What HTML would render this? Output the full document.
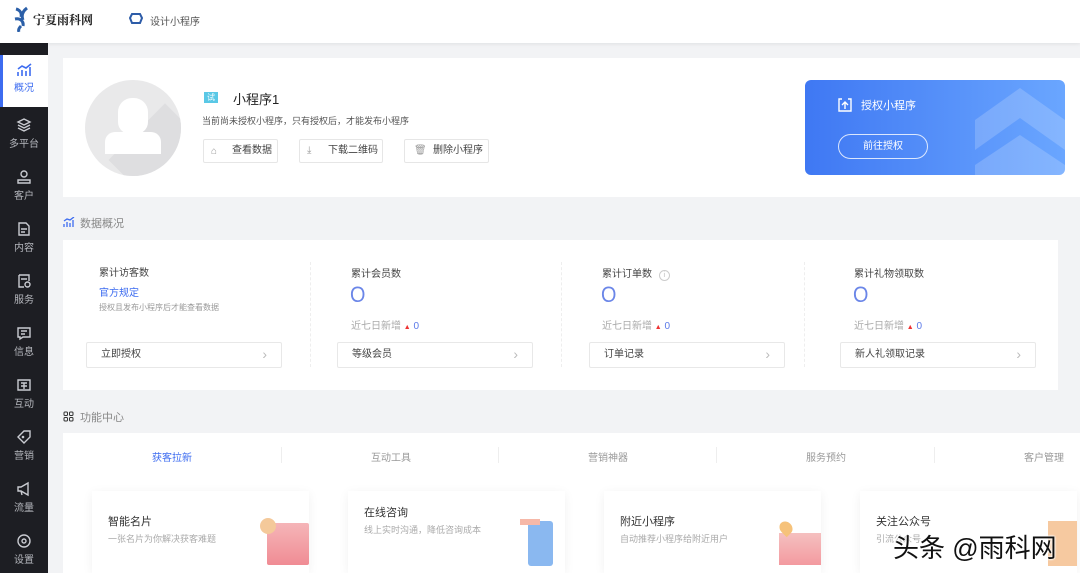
<!DOCTYPE html>
<html><head><meta charset="utf-8"><style>
*{margin:0;padding:0;box-sizing:border-box}
body{width:1080px;height:573px;overflow:hidden;background:#f2f3f5;font-family:"Liberation Sans","Noto Sans CJK SC",sans-serif;position:relative;color:#333}
.abs{position:absolute}
.hdr{left:0;top:0;width:1080px;height:43px;background:#fff;box-shadow:0 1px 4px rgba(0,0,0,.08);z-index:2}
.side{left:0;top:43px;width:48px;height:530px;background:#1d1e23}
.si{position:absolute;left:0;width:48px;text-align:center;color:#b4b6bc;font-size:10px}
.si svg{display:block;margin:0 auto 2px}
.card{background:#fff}
.btn{position:absolute;height:24px;border:1px solid #e6e6e6;border-radius:2px;font-size:10px;color:#444;line-height:22px;padding-left:28px;background:#fff}
.lab{font-size:10px;color:#444}
.zero{font-size:22px;color:#6b86e8;font-weight:300;margin-top:2px;line-height:26px;transform:scaleX(.9);transform-origin:left}
.sub{font-size:10px;color:#aaa}
.lb{position:absolute;width:196px;height:26px;border:1px solid #e8e8e8;border-radius:2px;font-size:10px;line-height:24px;padding-left:14px;color:#444}
.lb:after{content:"›";position:absolute;right:14px;color:#bbb;font-size:14px;top:-1px}
.fc{position:absolute;top:491px;width:217px;height:82px;background:#fff;box-shadow:0 2px 10px rgba(0,0,0,.06)}
.fc b{font-weight:normal;font-size:11px;color:#333;position:absolute;left:16px;top:22px}
.fc i{font-style:normal;font-size:9px;color:#aaa;position:absolute;left:16px;top:41px;width:130px;line-height:15px}
.tab{position:absolute;top:449px;font-size:10px;color:#999}
</style></head><body>
<div class="abs hdr">
 <svg class="abs" style="left:12px;top:6px" width="22" height="26" viewBox="0 0 22 26"><path d="M4 3c4 1 6 4 5 8M15 2c-4 3-6 7-4 12M3 13c5-1 9 2 8 7M9 20c-2 2-3 4-2 6" stroke="#2b5fa8" stroke-width="3" fill="none"/></svg>
 <div class="abs" style="left:33px;top:11px;font-family:'Noto Serif CJK SC',serif;font-size:12px;font-weight:bold;color:#222">宁夏雨科网</div>
 <svg class="abs" style="left:129px;top:12px" width="14" height="13" viewBox="0 0 14 13"><path d="M3 2h8l2 4-2 5H3L1 6z" fill="none" stroke="#2d5ca8" stroke-width="2"/></svg>
 <div class="abs" style="left:150px;top:13px;font-size:10px;color:#555">设计小程序</div>
</div>
<div class="abs side">
 <div class="abs" style="left:0;top:12px;width:48px;height:52px;background:#fff;border-left:3px solid #3d6cf0"></div>
 <div class="si" style="top:20px;color:#3d6cf0"><svg width="16" height="14" viewBox="0 0 16 14"><path d="M2 13V9M6 13V7M10 13V8M14 13V4M2 6l4-3 4 2 5-4" stroke="#3d6cf0" stroke-width="1.6" fill="none"/></svg>概况</div>
 <div class="si" style="top:74px"><svg width="16" height="16" viewBox="0 0 16 16"><path d="M8 2l6 3-6 3-6-3zM2 8l6 3 6-3M2 11l6 3 6-3" stroke="#c9cbd1" stroke-width="1.4" fill="none"/></svg>多平台</div>
 <div class="si" style="top:126px"><svg width="16" height="16" viewBox="0 0 16 16"><circle cx="8" cy="5" r="3" stroke="#c9cbd1" stroke-width="1.4" fill="none"/><path d="M2 14v-3h12v3z" stroke="#c9cbd1" stroke-width="1.4" fill="none"/></svg>客户</div>
 <div class="si" style="top:178px"><svg width="16" height="16" viewBox="0 0 16 16"><path d="M3 2h7l3 3v9H3z M5 8h6M5 11h4" stroke="#c9cbd1" stroke-width="1.4" fill="none"/></svg>内容</div>
 <div class="si" style="top:230px"><svg width="16" height="16" viewBox="0 0 16 16"><path d="M3 2h10v6M3 2v12h5M5 6h6" stroke="#c9cbd1" stroke-width="1.4" fill="none"/><circle cx="11.5" cy="11.5" r="2.5" stroke="#c9cbd1" stroke-width="1.4" fill="none"/></svg>服务</div>
 <div class="si" style="top:282px"><svg width="16" height="16" viewBox="0 0 16 16"><path d="M2 3h12v9H7l-3 2v-2H2z M5 6h6M5 9h4" stroke="#c9cbd1" stroke-width="1.4" fill="none"/></svg>信息</div>
 <div class="si" style="top:334px"><svg width="16" height="16" viewBox="0 0 16 16"><path d="M2 3h12v10H2z M5 6h6M8 6v6M5 9h6" stroke="#c9cbd1" stroke-width="1.4" fill="none"/></svg>互动</div>
 <div class="si" style="top:386px"><svg width="16" height="16" viewBox="0 0 16 16"><path d="M2 8l6-6h6v6l-6 6z" stroke="#c9cbd1" stroke-width="1.4" fill="none"/><circle cx="7" cy="8" r="1.3" fill="#c9cbd1"/></svg>营销</div>
 <div class="si" style="top:438px"><svg width="16" height="16" viewBox="0 0 16 16"><path d="M2 6h3l7-4v12l-7-4H2z M5 10l1 4" stroke="#c9cbd1" stroke-width="1.4" fill="none"/></svg>流量</div>
 <div class="si" style="top:490px"><svg width="16" height="16" viewBox="0 0 16 16"><circle cx="8" cy="8" r="6" stroke="#c9cbd1" stroke-width="1.4" fill="none"/><circle cx="8" cy="8" r="2" stroke="#c9cbd1" stroke-width="1.4" fill="none"/></svg>设置</div>
</div>

<div class="abs card" style="left:63px;top:58px;width:1017px;height:139px"></div>
<div class="abs" style="left:85px;top:80px;width:96px;height:96px;border-radius:50%;background:#e9e9ea;overflow:hidden">
 <div class="abs" style="left:40px;top:40px;width:80px;height:80px;background:#dedee0;transform:rotate(45deg)"></div>
 <div class="abs" style="left:33px;top:18px;width:30px;height:36px;border-radius:14px 14px 12px 12px;background:#fff"></div>
 <div class="abs" style="left:20px;top:52px;width:56px;height:22px;border-radius:10px 10px 0 0;background:#fff"></div>
</div>
<div class="abs" style="left:204px;top:92px;width:14px;height:11px;background:#5ac8e6;color:#fff;font-size:8px;text-align:center;line-height:11px">试</div>
<div class="abs" style="left:233px;top:89px;font-size:13px;color:#222">小程序1</div>
<div class="abs" style="left:202px;top:114px;font-size:9px;color:#555">当前尚未授权小程序，只有授权后，才能发布小程序</div>
<div class="btn" style="left:203px;top:139px;width:75px">查看数据</div>
<div class="btn" style="left:299px;top:139px;width:84px">下载二维码</div>
<div class="btn" style="left:404px;top:139px;width:85px">删除小程序</div>
<div class="abs" style="left:211px;top:146px;font-size:10px;color:#999">⌂</div>
<div class="abs" style="left:307px;top:145px;font-size:10px;color:#999">⤓</div>
<div class="abs" style="left:414px;top:145px;font-size:10px;color:#999">🗑</div>

<div class="abs" style="left:805px;top:80px;width:260px;height:95px;border-radius:6px;background:linear-gradient(90deg,#3f78f3,#6aa6ff);overflow:hidden">
 <svg class="abs" style="left:160px;top:0" width="100" height="95" viewBox="0 0 100 95"><path d="M10 40L55 8l45 32v30L55 38 10 70z" fill="rgba(255,255,255,.18)"/><path d="M10 85L55 55l45 30v20H10z" fill="rgba(255,255,255,.18)"/></svg>
 <svg class="abs" style="left:33px;top:18px" width="14" height="14" viewBox="0 0 14 14"><path d="M4 1H1v12h12V1h-3M7 11V4M4 7l3-3 3 3" stroke="#fff" stroke-width="1.4" fill="none"/></svg>
 <div class="abs" style="left:56px;top:17px;font-size:11px;color:#fff">授权小程序</div>
 <div class="abs" style="left:33px;top:54px;width:90px;height:25px;border:1px solid rgba(255,255,255,.8);border-radius:13px;color:#fff;font-size:10px;text-align:center;line-height:23px">前往授权</div>
</div>

<svg class="abs" style="left:63px;top:217px" width="12" height="11" viewBox="0 0 12 11"><path d="M1 10V7M4 10V5M7 10V6M10 10V3M1 4l3-2 3 1 4-3" stroke="#3d6cf0" stroke-width="1.3" fill="none"/></svg>
<div class="abs" style="left:80px;top:215px;font-size:11px;color:#888">数据概况</div>
<div class="abs card" style="left:63px;top:240px;width:995px;height:150px"></div>
<div class="abs" style="left:310px;top:262px;height:105px;border-left:1px dashed #eee"></div>
<div class="abs" style="left:561px;top:262px;height:105px;border-left:1px dashed #eee"></div>
<div class="abs" style="left:804px;top:262px;height:105px;border-left:1px dashed #eee"></div>

<div class="abs lab" style="left:99px;top:264px">累计访客数</div>
<div class="abs" style="left:99px;top:284px;font-size:10px;color:#3d6cf0">官方规定</div>
<div class="abs" style="left:99px;top:302px;font-size:8px;color:#999">授权且发布小程序后才能查看数据</div>
<div class="lb" style="left:86px;top:342px">立即授权</div>

<div class="abs lab" style="left:351px;top:265px">累计会员数</div>
<div class="abs zero" style="left:350px;top:280px">O</div>
<div class="abs sub" style="left:351px;top:317px">近七日新增 <span style="color:#e33;font-size:7px">▲</span> <span style="color:#5b79e8">0</span></div>
<div class="lb" style="left:337px;top:342px">等级会员</div>

<div class="abs lab" style="left:602px;top:265px">累计订单数 <span style="display:inline-block;width:11px;height:11px;border:1px solid #ccc;border-radius:50%;font-size:7px;text-align:center;line-height:9px;color:#bbb;margin-left:4px">i</span></div>
<div class="abs zero" style="left:601px;top:280px">O</div>
<div class="abs sub" style="left:602px;top:317px">近七日新增 <span style="color:#e33;font-size:7px">▲</span> <span style="color:#5b79e8">0</span></div>
<div class="lb" style="left:589px;top:342px">订单记录</div>

<div class="abs lab" style="left:854px;top:265px">累计礼物领取数</div>
<div class="abs zero" style="left:853px;top:280px">O</div>
<div class="abs sub" style="left:854px;top:317px">近七日新增 <span style="color:#e33;font-size:7px">▲</span> <span style="color:#5b79e8">0</span></div>
<div class="lb" style="left:840px;top:342px">新人礼领取记录</div>

<svg class="abs" style="left:63px;top:411px" width="11" height="11" viewBox="0 0 11 11"><rect x="1" y="1" width="3.5" height="3.5" rx="1" stroke="#333" fill="none"/><rect x="6.5" y="1" width="3.5" height="3.5" rx="1" stroke="#333" fill="none"/><rect x="1" y="6.5" width="3.5" height="3.5" rx="1" stroke="#333" fill="none"/><rect x="6.5" y="6.5" width="3.5" height="3.5" rx="1" stroke="#333" fill="none"/></svg>
<div class="abs" style="left:80px;top:409px;font-size:11px;color:#888">功能中心</div>
<div class="abs card" style="left:63px;top:433px;width:1017px;height:140px"></div>
<div class="tab" style="left:152px;color:#3d6cf0">获客拉新</div>
<div class="abs" style="left:281px;top:447px;height:16px;border-left:1px solid #eee"></div>
<div class="tab" style="left:371px">互动工具</div>
<div class="abs" style="left:498px;top:447px;height:16px;border-left:1px solid #eee"></div>
<div class="tab" style="left:588px">营销神器</div>
<div class="abs" style="left:716px;top:447px;height:16px;border-left:1px solid #eee"></div>
<div class="tab" style="left:806px">服务预约</div>
<div class="abs" style="left:934px;top:447px;height:16px;border-left:1px solid #eee"></div>
<div class="tab" style="left:1024px">客户管理</div>

<div class="fc" style="left:92px"><b style="top:22px">智能名片</b><i>一张名片为你解决获客难题</i>
 <div class="abs" style="left:175px;top:32px;width:42px;height:42px;background:linear-gradient(#f5b5b8,#f08c94);border-radius:2px"></div><div class="abs" style="left:168px;top:27px;width:16px;height:16px;border-radius:50%;background:#f4c99a"></div></div>
<div class="fc" style="left:348px"><b style="top:13px">在线咨询</b><i style="top:32px">线上实时沟通，降低咨询成本</i>
 <div class="abs" style="left:180px;top:30px;width:25px;height:45px;background:#8ab8f0;border-radius:3px"></div><div class="abs" style="left:172px;top:28px;width:20px;height:6px;background:#f6b8a8"></div></div>
<div class="fc" style="left:604px"><b>附近小程序</b><i>自动推荐小程序给附近用户</i>
 <div class="abs" style="left:175px;top:42px;width:42px;height:32px;background:linear-gradient(#f5c0c0,#f39aa0)"></div><div class="abs" style="left:176px;top:30px;width:12px;height:14px;border-radius:50% 50% 50% 0;transform:rotate(-45deg);background:#f6c27a"></div></div>
<div class="fc" style="left:860px"><b>关注公众号</b><i>引流公众号</i>
 <div class="abs" style="left:188px;top:30px;width:29px;height:45px;background:#f6c9a0"></div></div>
<div class="abs" style="left:893px;top:528px;font-size:26px;color:#111;text-shadow:0 0 2px #fff,0 0 2px #fff,0 0 2px #fff;white-space:nowrap">头条 @雨科网</div>
</body></html>
